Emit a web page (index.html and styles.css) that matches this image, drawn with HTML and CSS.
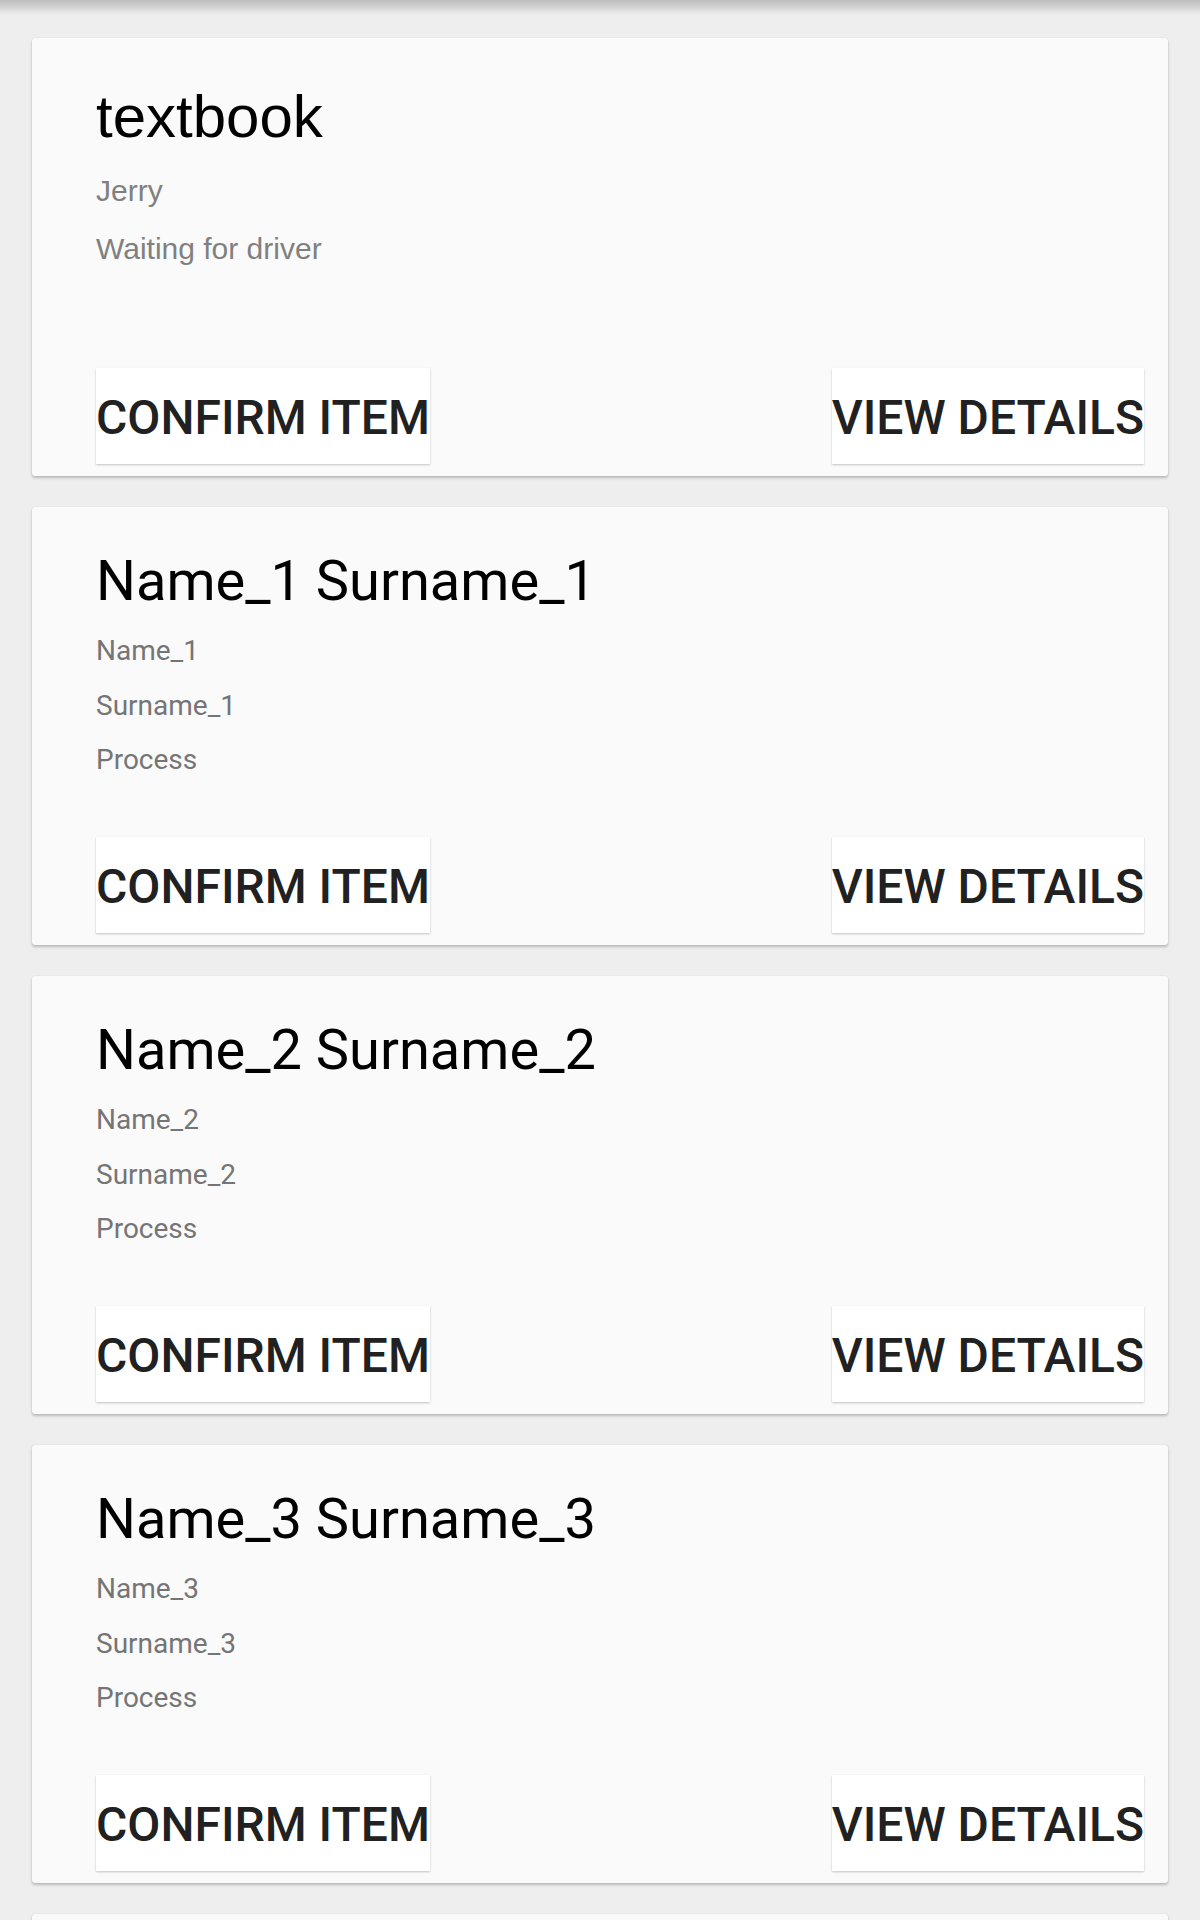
FILE: index.html
```html
<!DOCTYPE html>
<html lang="en">
<head>
<meta charset="utf-8">
<title>Items</title>
<link rel="stylesheet" href="styles.css">
</head>
<body>
<div class="appbar-shadow"></div>
<main class="list">
  <section class="card card--legacy">
    <h2 class="card__title">textbook</h2>
    <p class="card__line">Jerry</p>
    <p class="card__line">Waiting for driver</p>
    <div class="card__actions">
      <button class="btn">CONFIRM ITEM</button>
      <button class="btn">VIEW DETAILS</button>
    </div>
  </section>
  <section class="card">
    <h2 class="card__title">Name_1 Surname_1</h2>
    <p class="card__line">Name_1</p>
    <p class="card__line">Surname_1</p>
    <p class="card__line">Process</p>
    <div class="card__actions">
      <button class="btn">CONFIRM ITEM</button>
      <button class="btn">VIEW DETAILS</button>
    </div>
  </section>
  <section class="card">
    <h2 class="card__title">Name_2 Surname_2</h2>
    <p class="card__line">Name_2</p>
    <p class="card__line">Surname_2</p>
    <p class="card__line">Process</p>
    <div class="card__actions">
      <button class="btn">CONFIRM ITEM</button>
      <button class="btn">VIEW DETAILS</button>
    </div>
  </section>
  <section class="card">
    <h2 class="card__title">Name_3 Surname_3</h2>
    <p class="card__line">Name_3</p>
    <p class="card__line">Surname_3</p>
    <p class="card__line">Process</p>
    <div class="card__actions">
      <button class="btn">CONFIRM ITEM</button>
      <button class="btn">VIEW DETAILS</button>
    </div>
  </section>
  <section class="card card--peek"></section>
</main>
</body>
</html>
```
FILE: styles.css
```css
html, body {
  margin: 0;
  padding: 0;
}
body {
  background: #eeeeee;
  font-family: Roboto, "Noto Sans", sans-serif;
  overflow: hidden;
}
.appbar-shadow {
  height: 16px;
  background: linear-gradient(to bottom, #bdbdbd 0%, #cfcfcf 40%, #e6e6e6 75%, #eeeeee 100%);
}
.list {
  display: flex;
  flex-direction: column;
  gap: 31px;
  padding: 22px 32px 0 32px;
}
.card {
  box-sizing: border-box;
  height: 438px;
  flex: none;
  background: #fafafa;
  border-radius: 3px;
  box-shadow: 0 2px 3px rgba(0, 0, 0, 0.22), 0 0 1px rgba(0, 0, 0, 0.18);
  display: flex;
  flex-direction: column;
  padding: 40px 24px 12px 64px;
}
.card__title {
  margin: 0 0 9px 0;
  font-family: Roboto, sans-serif;
  font-weight: 400;
  font-size: 56px;
  line-height: 68px;
  color: #000;
}
.card__line {
  margin: 0;
  font-family: Roboto, sans-serif;
  font-size: 28px;
  line-height: 54.5px;
  color: #757575;
}
.card--legacy .card__title {
  font-family: "Liberation Sans", Arial, sans-serif;
  font-size: 60px;
  margin: 5px 0 11px 0;
}
.card--legacy .card__line {
  font-family: "Liberation Sans", Arial, sans-serif;
  font-size: 30px;
  line-height: 58px;
  color: #808080;
}
.card__actions {
  margin-top: auto;
  display: flex;
  justify-content: space-between;
  align-items: flex-end;
}
.btn {
  box-sizing: border-box;
  border: 0;
  margin: 0;
  padding: 3px 0 0 0;
  height: 96px;
  background: #ffffff;
  box-shadow: 0 1px 2px rgba(0, 0, 0, 0.22);
  font-family: Roboto, sans-serif;
  font-weight: 500;
  font-size: 48px;
  line-height: 93px;
  color: #212121;
  cursor: pointer;
}
```
